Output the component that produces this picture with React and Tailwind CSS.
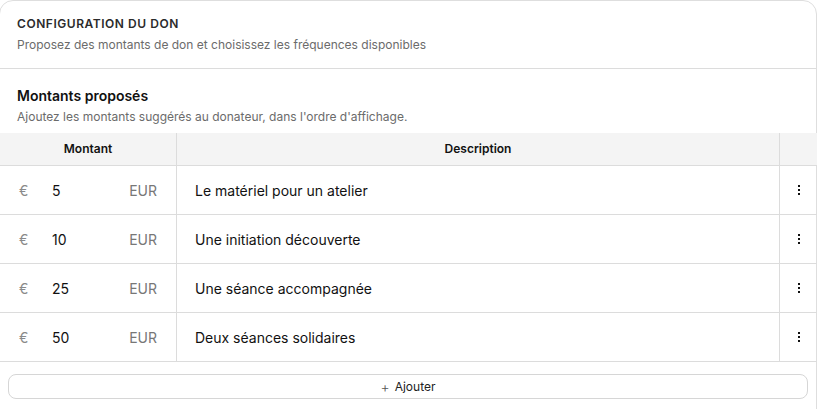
import React from 'react';

const rows = [
  { amount: '5', description: 'Le matériel pour un atelier' },
  { amount: '10', description: 'Une initiation découverte' },
  { amount: '25', description: 'Une séance accompagnée' },
  { amount: '50', description: 'Deux séances solidaires' },
];

// Small vertical "more" icon made of three square dots
function MoreDots() {
  return (
    <svg width="4" height="12" viewBox="0 0 4 12" className="text-[#111]">
      <rect x="1" y="1" width="2" height="2" fill="currentColor" />
      <rect x="1" y="5" width="2" height="2" fill="currentColor" />
      <rect x="1" y="9" width="2" height="2" fill="currentColor" />
    </svg>
  );
}

export default function App() {
  return (
    <div className="w-[818px] h-[409px] bg-white overflow-hidden font-['Inter',sans-serif]">
      <div className="-ml-[1px] w-[818px] h-[430px] border border-[#dedede] rounded-[14px] bg-white">
        {/* Card header */}
        <div className="pl-[17px] pt-[15px] pb-[15px] border-b border-[#dcdcdc]">
          <h2 className="text-[12px] font-semibold tracking-[0.045em] text-[#2b2b2b] leading-[16px]">
            CONFIGURATION DU DON
          </h2>
          <p className="mt-[5px] text-[12px] text-[#6b6b6b] leading-[16px]">
            Proposez des montants de don et choisissez les fréquences disponibles
          </p>
        </div>

        {/* Section title */}
        <div className="pl-[17px] pt-[18px] pb-[9px]">
          <h3 className="text-[14px] font-semibold text-[#111] leading-[18px]">Montants proposés</h3>
          <p className="mt-[4px] text-[12px] text-[#6b6b6b] leading-[15px]">
            Ajoutez les montants suggérés au donateur, dans l'ordre d'affichage.
          </p>
        </div>

        {/* Table */}
        <div className="w-[817px]">
          <div className="flex h-[33px] bg-[#f4f4f4] border-b border-[#dcdcdc] text-[12px] font-semibold text-[#111]">
            <div className="w-[177px] flex items-center justify-center border-r border-[#dcdcdc]">Montant</div>
            <div className="w-[603px] flex items-center justify-center border-r border-[#dcdcdc]">Description</div>
            <div className="flex-1" />
          </div>
          {rows.map((row) => (
            <div key={row.amount} className="flex h-[49px] border-b border-[#dcdcdc] text-[14px]">
              <div className="w-[177px] flex items-center border-r border-[#dcdcdc]">
                <span className="w-[34px] pl-[19px] text-[#8a8a8a]">€</span>
                <span className="flex-1 pl-[18px] text-[#111]">{row.amount}</span>
                <span className="pr-[19px] text-[#777]">EUR</span>
              </div>
              <div className="w-[603px] flex items-center pl-[18px] border-r border-[#dcdcdc] text-[#111]">
                {row.description}
              </div>
              <div className="flex-1 flex items-center justify-center">
                <MoreDots />
              </div>
            </div>
          ))}
        </div>

        {/* Add button */}
        <div className="px-[8px] pt-[12px]">
          <button className="w-full h-[25px] border border-[#d6d6d6] rounded-[8px] flex items-center justify-center gap-[5px] text-[12px] text-[#222]">
            <span className="text-[14px] leading-none font-light text-[#555]">+</span>
            <span>Ajouter</span>
          </button>
        </div>
      </div>
    </div>
  );
}
